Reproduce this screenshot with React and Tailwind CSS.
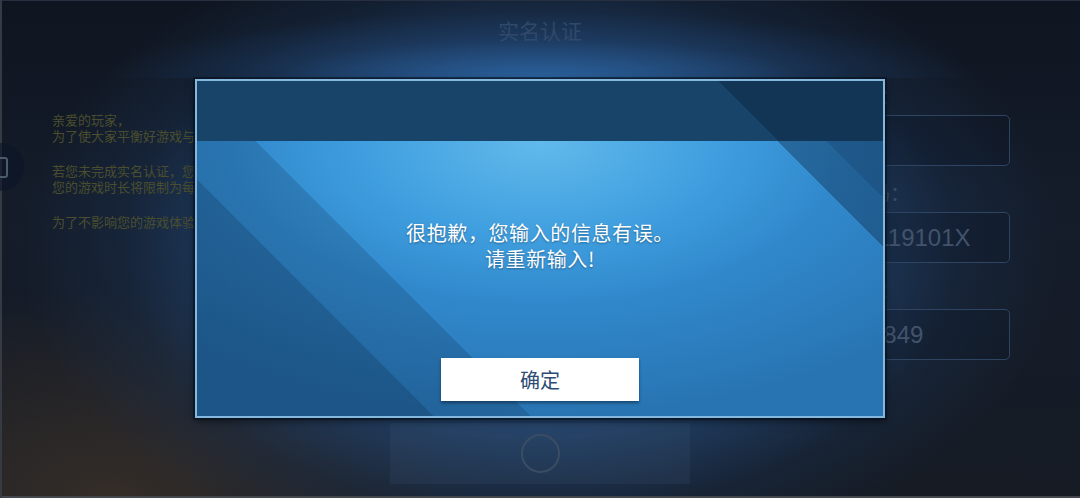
import React from "react";

const cjk = "font-['Noto_Sans_CJK_SC','Noto_Sans',sans-serif]";

function Field({ label, value, first }) {
  return (
    <div className="flex flex-col">
      <div
        className={`h-[30px] ${first ? "mt-[3px]" : "mt-[12px]"} mb-[4px] flex items-center justify-center text-[20px] text-[#3a4d66]`}
      >
        {label}
      </div>
      <div className="h-[51px] rounded-[5px] border border-[#2d4462] bg-[rgba(8,16,30,0.15)] flex items-center justify-center font-['Liberation_Sans',sans-serif] text-[24px] text-[#42536b]">
        {value}
      </div>
    </div>
  );
}

export default function App() {
  return (
    <div
      className={`relative w-[1080px] h-[498px] overflow-hidden flex flex-col bg-[#121824] bg-[image:radial-gradient(ellipse_520px_330px_at_540px_250px,rgba(44,98,160,0.92),rgba(36,76,124,0.72)_55%,rgba(26,50,82,0.38)_80%,transparent),radial-gradient(ellipse_380px_210px_at_110px_498px,rgba(54,46,40,0.95),transparent),linear-gradient(180deg,#0f1520,#141c2a_40%,#161b24)] shadow-[inset_2px_0_0_#363b43,inset_0_-2px_0_#43464c,inset_0_1px_0_#263040] ${cjk}`}
    >
      {/* page title bar */}
      <div className="h-[78px] shrink-0 flex justify-center pt-[16px] bg-[image:radial-gradient(ellipse_40%_85%_at_50%_100%,rgba(44,102,165,0.85),rgba(30,68,115,0.35)_60%,transparent_100%)]">
        <div className="text-[21px] leading-[28px] text-[#30496a]">实名认证</div>
      </div>

      <div className="flex flex-1 min-h-0">
        {/* notice text */}
        <div className="w-[390px] shrink-0 overflow-hidden pl-[52px] pt-[34px] text-[13px] leading-[16px] text-[#4b4e2e] whitespace-nowrap">
          <p>亲爱的玩家，</p>
          <p>为了使大家平衡好游戏与生活，根据国家相关规定，</p>
          <p className="mt-[19px]">若您未完成实名认证，您将无法进行游戏充值，</p>
          <p>您的游戏时长将限制为每日1小时。</p>
          <p className="mt-[19px]">为了不影响您的游戏体验，请尽快完成实名认证。</p>
        </div>

        {/* submit area */}
        <div className="w-[300px] shrink-0 flex flex-col justify-end pb-[14px]">
          <div className="h-[61px] flex items-center justify-center bg-[rgba(80,100,125,0.14)]">
            <div className="w-[39px] h-[39px] rounded-full border-2 border-[#3a4d62]" />
          </div>
        </div>

        {/* form */}
        <div className="w-[320px] shrink-0 flex flex-col">
          <Field first label="真实姓名：" value="" />
          <Field label="身份证号码：" value="44010619900119101X" />
          <Field label="手机号码：" value="13812345849" />
        </div>
      </div>

      {/* back button, half off the left edge */}
      <div className="absolute -left-[24px] top-[143px] w-[48px] h-[48px] rounded-full bg-[rgba(12,22,38,0.6)] flex items-center justify-center">
        <div className="w-[16px] h-[21px] rounded-[3px] border-2 border-[#4b5b6c]" />
      </div>

      {/* error dialog */}
      <div className="absolute left-[195px] top-[79px] w-[690px] h-[339px] flex flex-col border-2 border-[#84b8de] shadow-[0_0_0_2px_rgba(6,16,30,0.55),0_3px_8px_rgba(0,0,0,0.55)]">
        <div className="h-[60px] shrink-0 bg-[#194469] bg-[image:linear-gradient(45deg,transparent_78%,rgba(0,15,35,0.28)_78%)]" />
        <div className="relative flex-1 flex flex-col items-center bg-[#2977b5] bg-[image:radial-gradient(ellipse_75%_100%_at_50%_0%,#62baeb,#3f9edf_35%,#3088cb_60%,#2874b2_100%)]">
          <div className="absolute inset-0 bg-[image:linear-gradient(45deg,rgba(5,20,45,0.32)_24.6%,rgba(5,20,45,0.17)_24.6%,rgba(5,20,45,0.17)_34.7%,transparent_34.7%,transparent_89%,rgba(5,20,45,0.33)_89%,rgba(5,20,45,0.33)_94.1%,rgba(5,20,45,0.42)_94.1%)]" />
          <div className="relative mt-[79px] text-center text-[20px] leading-[26px] tracking-[0.6px] text-white [text-shadow:0_1px_2px_rgba(0,0,0,0.35)]">
            <p>很抱歉，您输入的信息有误。</p>
            <p>请重新输入!</p>
          </div>
          <button className="relative mt-auto mb-[15px] w-[198px] h-[43px] bg-white shadow-[0_2px_3px_rgba(0,0,0,0.4)] flex items-center justify-center text-[20px] text-[#2d4b74]">
            确定
          </button>
        </div>
      </div>
    </div>
  );
}
